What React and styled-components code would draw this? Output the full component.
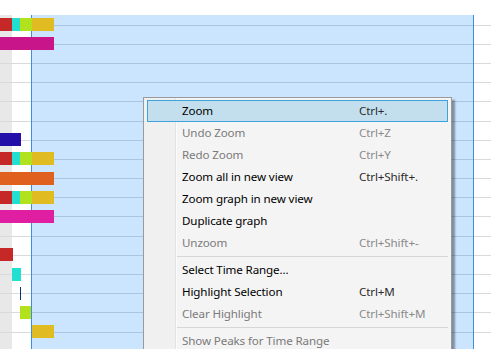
import React from "react";
import styled, { createGlobalStyle } from "styled-components";

const Global = createGlobalStyle`
  html, body { margin: 0; padding: 0; background: #fff; overflow: hidden; }
  #root { width: 491px; height: 349px; }
`;

const Page = styled.div`
  position: relative;
  width: 491px;
  height: 349px;
  overflow: hidden;
  background: #fff;
  font-family: "Noto Sans", "Open Sans", sans-serif;
`;

const TopBand = styled.div`
  height: 15px;
  background: #fff;
`;

const Chart = styled.div`
  display: flex;
  flex-direction: column;
  height: 334px;
  background: linear-gradient(
    to right,
    #e8e8e8 0 12px,
    #ffffff 12px 31px,
    #3d8ede 31px 32px,
    #cce5ff 32px 473px,
    #3d8ede 473px 474px,
    #ffffff 474px
  );
`;

const Track = styled.div`
  position: relative;
  flex: 0 0 19.2px;
  height: 19.2px;
  &::before {
    content: "";
    position: absolute;
    left: 0;
    right: 0;
    top: 9.6px;
    height: 1px;
    background: linear-gradient(
      to right,
      #dadada 0 31px,
      transparent 31px 32px,
      #a9c5e2 32px 473px,
      transparent 473px 474px,
      #dadada 474px
    );
  }
`;

const Bar = styled.div`
  position: absolute;
  top: 3.1px;
  height: 13px;
  left: ${(p) => p.$left}px;
  width: ${(p) => p.$width}px;
  background: ${(p) => p.$color};
`;

const Menu = styled.div`
  position: absolute;
  left: 143px;
  top: 97px;
  width: 309px;
  box-sizing: border-box;
  border: 1px solid #9a9a9a;
  padding: 2px 3px;
  background: linear-gradient(
    to right,
    #f0f0f0 0 31px,
    #e3e3e3 31px 32px,
    #fbfbfb 32px 33px,
    #f4f4f4 33px
  );
  box-shadow: 3px 3px 2px rgba(0, 0, 0, 0.38);
`;

const Item = styled.div`
  display: grid;
  grid-template-columns: 177px auto;
  box-sizing: border-box;
  height: 22px;
  padding-left: 34px;
  align-items: center;
  font-size: 11.6px;
  letter-spacing: -0.12px;
  line-height: 20px;
  white-space: nowrap;
  color: ${(p) => (p.$disabled ? "#7a7a7a" : "#000")};
  border: 1px solid ${(p) => (p.$active ? "#3ea2dc" : "transparent")};
  background: ${(p) => (p.$active ? "#c3dfee" : "transparent")};
`;

const Shortcut = styled.span`
  color: ${(p) => (p.$disabled ? "#8a8a8a" : "#2a2a2a")};
`;

const Separator = styled.div`
  height: 5px;
  margin-left: 30px;
  background: linear-gradient(
    to bottom,
    transparent 0 2px,
    #d7d7d7 2px 3px,
    transparent 3px
  );
`;

const C = {
  red: "#c62828",
  cyan: "#22dfd2",
  lime: "#b2e21e",
  yellow: "#e0bc22",
  magenta: "#c8168a",
  darkblue: "#2410a8",
  orange: "#e06020",
  pink: "#e01ea2",
  navy: "#103070",
};

const multi = [
  [0, 12, C.red],
  [12, 8, C.cyan],
  [20, 12, C.lime],
  [32, 22, C.yellow],
];

const rows = [
  multi,
  [[0, 54, C.magenta]],
  [],
  [],
  [],
  [],
  [[0, 21, C.darkblue]],
  multi,
  [[0, 54, C.orange]],
  multi,
  [[0, 54, C.pink]],
  [],
  [[0, 13, C.red]],
  [[12, 9, C.cyan]],
  [[20, 1, C.navy]],
  [[20, 11, C.lime]],
  [[32, 22, C.yellow]],
  [],
];

const menu = [
  { label: "Zoom", key: "Ctrl+.", active: true },
  { label: "Undo Zoom", key: "Ctrl+Z", disabled: true },
  { label: "Redo Zoom", key: "Ctrl+Y", disabled: true },
  { label: "Zoom all in new view", key: "Ctrl+Shift+." },
  { label: "Zoom graph in new view" },
  { label: "Duplicate graph" },
  { label: "Unzoom", key: "Ctrl+Shift+-", disabled: true },
  { sep: true },
  { label: "Select Time Range..." },
  { label: "Highlight Selection", key: "Ctrl+M" },
  { label: "Clear Highlight", key: "Ctrl+Shift+M", disabled: true },
  { sep: true },
  { label: "Show Peaks for Time Range", disabled: true },
];

export default function App() {
  return (
    <Page>
      <Global />
      <TopBand />
      <Chart>
        {rows.map((bars, i) => (
          <Track key={i}>
            {bars.map(([l, w, c], j) => (
              <Bar key={j} $left={l} $width={w} $color={c} />
            ))}
          </Track>
        ))}
      </Chart>
      <Menu>
        {menu.map((m, i) =>
          m.sep ? (
            <Separator key={i} />
          ) : (
            <Item key={i} $active={m.active} $disabled={m.disabled}>
              <span>{m.label}</span>
              <Shortcut $disabled={m.disabled}>{m.key || ""}</Shortcut>
            </Item>
          )
        )}
      </Menu>
    </Page>
  );
}
